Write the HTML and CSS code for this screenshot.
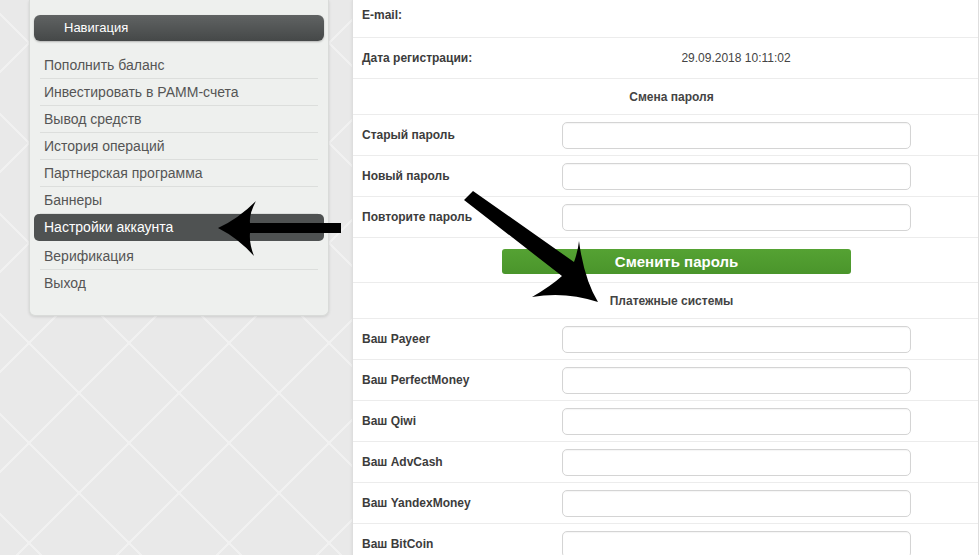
FILE: index.html
```html
<!DOCTYPE html>
<html>
<head>
<title>Настройки аккаунта</title>
<link rel="stylesheet" href="styles.css">
</head>
<body>
<div class="page">
  <div class="sidebar">
    <div class="nav_title">Навигация</div>
    <ul class="menu">
      <li><a href="#">Пополнить баланс</a></li>
      <li><a href="#">Инвестировать в РАММ-счета</a></li>
      <li><a href="#">Вывод средств</a></li>
      <li><a href="#">История операций</a></li>
      <li><a href="#">Партнерская программа</a></li>
      <li><a href="#">Баннеры</a></li>
      <li class="active"><a href="#">Настройки аккаунта</a></li>
      <li><a href="#">Верификация</a></li>
      <li class="last"><a href="#">Выход</a></li>
    </ul>
  </div>

  <div class="content">
    <div class="row first">
      <div class="label">E-mail:</div>
      <div class="value"></div>
    </div>
    <div class="row">
      <div class="label">Дата регистрации:</div>
      <div class="value">29.09.2018 10:11:02</div>
    </div>

    <div class="row heading">Смена пароля</div>
    <div class="row">
      <label class="label" for="old_pass">Старый пароль</label>
      <input type="password" id="old_pass" name="old_pass">
    </div>
    <div class="row">
      <label class="label" for="new_pass">Новый пароль</label>
      <input type="password" id="new_pass" name="new_pass">
    </div>
    <div class="row">
      <label class="label" for="re_pass">Повторите пароль</label>
      <input type="password" id="re_pass" name="re_pass">
    </div>
    <div class="row button_row">
      <button type="submit" class="green_btn">Сменить пароль</button>
    </div>

    <div class="row heading">Платежные системы</div>
    <div class="row">
      <label class="label" for="payeer">Ваш Payeer</label>
      <input type="text" id="payeer" name="payeer">
    </div>
    <div class="row">
      <label class="label" for="pm">Ваш PerfectMoney</label>
      <input type="text" id="pm" name="pm">
    </div>
    <div class="row">
      <label class="label" for="qiwi">Ваш Qiwi</label>
      <input type="text" id="qiwi" name="qiwi">
    </div>
    <div class="row">
      <label class="label" for="advcash">Ваш AdvCash</label>
      <input type="text" id="advcash" name="advcash">
    </div>
    <div class="row">
      <label class="label" for="yandex">Ваш YandexMoney</label>
      <input type="text" id="yandex" name="yandex">
    </div>
    <div class="row">
      <label class="label" for="bitcoin">Ваш BitCoin</label>
      <input type="text" id="bitcoin" name="bitcoin">
    </div>
  </div>
</div>

<!-- hand-drawn arrows on top of the screenshot -->
<svg class="arrows" width="979" height="555" viewBox="0 0 979 555">
  <path d="M218,228 Q238,219 256,201 Q249,214 250,223 L341,223 L341,233 L250,233 Q249,243 254,256 Q238,238 218,228 Z"/>
  <path d="M473,191 L574,262 Q578,251 579,241 Q584,279 598,302 Q565,291 532,297 Q551,286 562,276 L464,200 Z"/>
</svg>
</body>
</html>
```

FILE: styles.css
```css
body {
  margin: 0;
  font-family: "Liberation Sans", Arial, sans-serif;
  background-color: #e9e9e9;
  background-image:
    linear-gradient(45deg, transparent 49.3%, #f1f1f1 49.5%, #f1f1f1 50.5%, transparent 50.7%),
    linear-gradient(-45deg, transparent 49.3%, #f1f1f1 49.5%, #f1f1f1 50.5%, transparent 50.7%);
  background-size: 100px 100px;
  background-position: 79px 93px;
  height: 555px;
  overflow: hidden;
}

.page {
  display: flex;
  align-items: flex-start;
  padding-left: 29px;
}

.sidebar {
  width: 300px;
  box-sizing: border-box;
  background-color: #eef0ee;
  border: 1px solid #d9dbd9;
  border-top: none;
  border-radius: 0 0 6px 6px;
  box-shadow: 0 1px 3px rgba(0, 0, 0, 0.12);
  padding: 15px 0 19px;
}

.nav_title {
  margin: 0 4px;
  height: 26px;
  line-height: 26px;
  padding-left: 30px;
  color: #fff;
  font-size: 13px;
  border-radius: 6px;
  background: linear-gradient(#606363, #454848);
  box-shadow: 0 1px 2px rgba(0, 0, 0, 0.25);
}

.menu {
  list-style: none;
  margin: 11px 0 0;
  padding: 0;
}

.menu li {
  margin: 0 4px;
  border-radius: 5px;
}

.menu a {
  display: block;
  margin: 0 6px;
  padding: 0 4px;
  line-height: 26px;
  font-size: 14px;
  color: #555;
  text-decoration: none;
  border-bottom: 1px solid #dcdedc;
}

.menu li.last a {
  border-bottom: none;
}

.menu li.active {
  background-color: #4f5252;
  margin-bottom: 2px;
}

.menu li.active a {
  color: #fff;
  border-bottom-color: transparent;
}

.content {
  margin-left: 23px;
  width: 625px;
  min-height: 600px;
  background-color: #fff;
  border-left: 1px solid #dedede;
  border-right: 1px solid #dedede;
  box-shadow: 0 0 3px rgba(0, 0, 0, 0.08);
}

.row {
  display: flex;
  align-items: center;
  height: 41px;
  box-sizing: border-box;
  border-bottom: 1px solid #ececec;
  font-size: 12px;
  color: #3c3c3c;
}

.row.first {
  height: 38px;
  padding-bottom: 7px;
}

.label {
  width: 200px;
  padding-left: 9px;
  font-weight: bold;
  color: #3c3c3c;
}

.value {
  width: 348px;
  text-align: center;
  color: #444;
}

.heading {
  height: 36px;
  justify-content: center;
  padding-left: 12px;
  font-weight: bold;
  color: #444;
}

.row input {
  width: 349px;
  height: 27px;
  box-sizing: border-box;
  border: 1px solid #d4d4d4;
  border-radius: 5px;
  background: #fff;
  box-shadow: inset 0 1px 1px rgba(0, 0, 0, 0.04);
  padding: 0 8px;
}

.button_row {
  height: 45px;
  align-items: flex-start;
  padding-top: 11px;
}

.green_btn {
  margin-left: 149px;
  width: 349px;
  height: 25px;
  border: none;
  border-radius: 3px;
  background: linear-gradient(#55a233, #4a952b);
  color: #fff;
  font-family: "Liberation Sans", Arial, sans-serif;
  font-weight: bold;
  font-size: 15px;
  cursor: pointer;
}

.arrows {
  position: absolute;
  top: 0;
  left: 0;
  pointer-events: none;
}

.arrows path {
  fill: #000;
}
```
